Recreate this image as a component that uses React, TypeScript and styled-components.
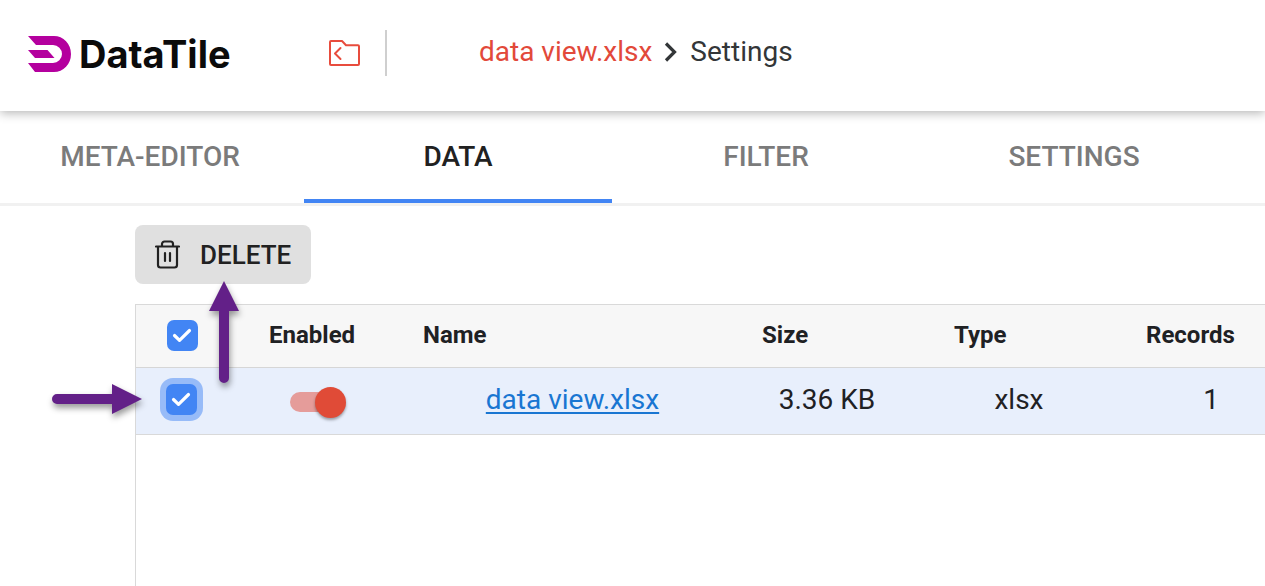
import React, { useState } from "react";
import styled, { createGlobalStyle } from "styled-components";

const GlobalStyle = createGlobalStyle`
  * { box-sizing: border-box; }
  body {
    margin: 0;
    background: #fff;
    color: #1f2124;
    font-family: Roboto, "Liberation Sans", sans-serif;
    font-size: 28px;
    line-height: 32px;
  }
`;

const Page = styled.div`
  position: relative;
  min-height: 100vh;
  display: flex;
  flex-direction: column;
  overflow: hidden;
`;

const Header = styled.header`
  position: relative;
  z-index: 1;
  display: flex;
  align-items: center;
  height: 111px;
  padding: 0 28px 6px;
  background: #fff;
  box-shadow: 0 2px 10px rgba(0, 0, 0, 0.3);
`;

const Brand = styled.a`
  display: flex;
  align-items: center;
  gap: 8px;
  width: 301px;
  padding-top: 2px;
  color: #0b0b0b;
  font-family: Inter, sans-serif;
  font-size: 38px;
  font-weight: 700;
  line-height: 48px;
  text-decoration: none;
`;

const FolderButton = styled.button`
  display: flex;
  padding: 0;
  border: 0;
  background: none;
  color: #e84c3d;
`;

const Divider = styled.span`
  width: 2px;
  height: 46px;
  margin-left: 25px;
  background: #cfcfcf;
`;

const Breadcrumb = styled.nav`
  display: flex;
  align-items: center;
  gap: 12px;
  margin-left: 92px;
  padding-bottom: 2px;
  color: #333638;
`;

const CrumbLink = styled.a`
  color: #e2493a;
  text-decoration: none;
`;

const Tabs = styled.nav`
  display: grid;
  grid-template-columns: 304fr 308fr 308fr 308fr;
  height: 95px;
  padding-right: 37px;
  border-bottom: 3px solid #f1f1f1;
`;

const Tab = styled.button<{ $active?: boolean }>`
  padding: 4px 0 0;
  border: 0;
  border-bottom: 4px solid ${(p) => (p.$active ? "#4285f4" : "transparent")};
  background: none;
  color: ${(p) => (p.$active ? "#212121" : "#7b7b7b")};
  font: 500 28px/32px Roboto, sans-serif;

  &:first-child {
    padding-right: 4px;
  }
`;

const Content = styled.main`
  flex: 1;
  display: flex;
  flex-direction: column;
  align-items: flex-start;
  gap: 20px;
  padding: 19px 0 0 135px;
`;

const DeleteButton = styled.button`
  display: flex;
  align-items: center;
  gap: 20px;
  height: 59px;
  padding: 0 20px;
  border: 0;
  border-radius: 8px;
  background: #e0e0e0;
  color: #212121;
  font: 500 26px/32px Roboto, sans-serif;
`;

const TableFrame = styled.div`
  flex: 1;
  width: 100%;
  overflow: hidden;
  border: 1px solid #d9d9d9;
  border-width: 1px 0 0 1px;
`;

const Table = styled.table`
  width: calc(100% + 42px);
  table-layout: fixed;
  border-collapse: separate;
  border-spacing: 0;
`;

const HeadCell = styled.th`
  height: 63px;
  padding: 0 0 2px 31px;
  border-bottom: 1px solid #d6d6d6;
  background: #f7f7f7;
  font-size: 24px;
  font-weight: 700;
  text-align: left;
`;

const Cell = styled.td`
  height: 67px;
  padding: 0 0 2px;
  border-bottom: 1px solid #d9d9d9;
  background: #e8effc;
  text-align: center;
`;

const SelectCell = styled(Cell)`
  padding: 0 0 4px 30px;
  text-align: left;
`;

const NameCell = styled(Cell)`
  padding-left: 22px;
`;

const FileLink = styled.a`
  color: #1976d2;
  text-decoration: underline;
  text-decoration-thickness: 2px;
  text-underline-offset: 3px;
`;

const CheckWrap = styled.label`
  position: relative;
  display: block;
  width: 31px;
  height: 31px;
`;

const CheckInput = styled.input<{ $ring?: boolean }>`
  display: block;
  appearance: none;
  width: 31px;
  height: 31px;
  margin: 0;
  border-radius: 7px;
  background: #4285f4;
  box-shadow: ${(p) => (p.$ring ? "0 0 0 6px #97bbf8" : "none")};
`;

const Tick = styled.svg`
  position: absolute;
  inset: 0;
  pointer-events: none;
`;

const Toggle = styled.input`
  position: relative;
  display: block;
  appearance: none;
  width: 50px;
  height: 20px;
  margin: 4px auto 0;
  border-radius: 10px;
  background: #e59c9a;

  &::after {
    content: "";
    position: absolute;
    top: -5px;
    right: -6px;
    width: 31px;
    height: 31px;
    border-radius: 50%;
    background: #e04b37;
    box-shadow: 0 2px 3px rgba(0, 0, 0, 0.35);
  }
`;

const Pointer = styled.svg`
  position: absolute;
  z-index: 2;
  overflow: visible;
  pointer-events: none;
  fill: #632088;
  filter: drop-shadow(1px 4px 3px rgba(0, 0, 0, 0.4));
`;

const UpPointer = styled(Pointer)`
  left: 209px;
  top: 281px;
`;

const RightPointer = styled(Pointer)`
  left: 52px;
  top: 384px;
`;

function Checkbox({ label, ring }: { label: string; ring?: boolean }) {
  return (
    <CheckWrap>
      <CheckInput type="checkbox" defaultChecked aria-label={label} $ring={ring} />
      <Tick width="31" height="31" viewBox="0 0 31 31" fill="none" stroke="#fff" strokeWidth="3.2" strokeLinecap="round" strokeLinejoin="round">
        <path d="M7.500 15.500l5 4.800L22.500 10.500" />
      </Tick>
    </CheckWrap>
  );
}

const tabs = ["META-EDITOR", "DATA", "FILTER", "SETTINGS"];
const columns = ["Enabled", "Name", "Size", "Type", "Records"];

export default function App() {
  const [active, setActive] = useState("DATA");
  return (
    <Page>
      <GlobalStyle />
      <Header>
        <Brand href="#">
          <svg width="43" height="36" viewBox="0 0 43 36" fill="#b4009e" aria-hidden="true">
            <path d="M0 0h26a17 18 0 0 1 0 36H7L0 27h25a9 9 0 0 0 0-18H8z" />
            <path d="M0 14h19.500l7 8H7z" />
          </svg>
          DataTile
        </Brand>
        <FolderButton aria-label="Back to folder">
          <svg width="31" height="26" viewBox="0 0 31 26" fill="none" stroke="currentColor" strokeWidth="2" strokeLinejoin="round" strokeLinecap="round">
            <path d="M2 1h11l4 4.300H29a1 1 0 0 1 1 1V24a1 1 0 0 1-1 1H2a1 1 0 0 1-1-1V2a1 1 0 0 1 1-1z" />
            <path d="M11.500 8l-5.500 5.500 5.500 5.500" />
          </svg>
        </FolderButton>
        <Divider />
        <Breadcrumb aria-label="Breadcrumb">
          <CrumbLink href="#">data view.xlsx</CrumbLink>
          <svg width="14" height="20" viewBox="0 0 14 20" fill="none" stroke="currentColor" strokeWidth="3.200" aria-hidden="true">
            <path d="M2 1.500l8.500 8.500L2 18.500" />
          </svg>
          <span>Settings</span>
        </Breadcrumb>
      </Header>
      <Tabs>
        {tabs.map((t) => (
          <Tab key={t} $active={t === active} onClick={() => setActive(t)}>
            {t}
          </Tab>
        ))}
      </Tabs>
      <Content>
        <DeleteButton>
          <svg width="25" height="29" viewBox="0 0 25 29" fill="none" stroke="currentColor" strokeWidth="2.200" strokeLinecap="round" strokeLinejoin="round" aria-hidden="true">
            <path d="M1 6.500h23M7 6V4a2.500 2.500 0 0 1 2.500-2.500h6A2.500 2.500 0 0 1 18 4v2M3 6.500V25a2.500 2.500 0 0 0 2.500 2.500h14A2.500 2.500 0 0 0 22 25V6.500M10 13v8M15 13v8" />
          </svg>
          DELETE
        </DeleteButton>
        <TableFrame>
          <Table>
            <colgroup>
              <col style={{ width: 102 }} />
              <col style={{ width: 154 }} />
              <col />
              <col style={{ width: 192 }} />
              <col style={{ width: 192 }} />
              <col style={{ width: 192 }} />
            </colgroup>
            <thead>
              <tr>
                <HeadCell>
                  <Checkbox label="Select all files" />
                </HeadCell>
                {columns.map((c) => (
                  <HeadCell key={c} scope="col">
                    {c}
                  </HeadCell>
                ))}
              </tr>
            </thead>
            <tbody>
              <tr>
                <SelectCell>
                  <Checkbox label="Select data view.xlsx" ring />
                </SelectCell>
                <Cell>
                  <Toggle type="checkbox" role="switch" defaultChecked aria-label="Enabled" />
                </Cell>
                <NameCell>
                  <FileLink href="#">data view.xlsx</FileLink>
                </NameCell>
                <Cell>3.36 KB</Cell>
                <Cell>xlsx</Cell>
                <Cell>1</Cell>
              </tr>
            </tbody>
          </Table>
        </TableFrame>
      </Content>
      <UpPointer width="30" height="103" viewBox="0 0 30 103" aria-hidden="true">
        <path d="M15 0l15 30H20v67a5 5 0 0 1-10 0V30H0z" />
      </UpPointer>
      <RightPointer width="90" height="30" viewBox="0 0 90 30" aria-hidden="true">
        <path d="M90 15L60 0v10H5a5 5 0 0 0 0 10h55v10z" />
      </RightPointer>
    </Page>
  );
}
